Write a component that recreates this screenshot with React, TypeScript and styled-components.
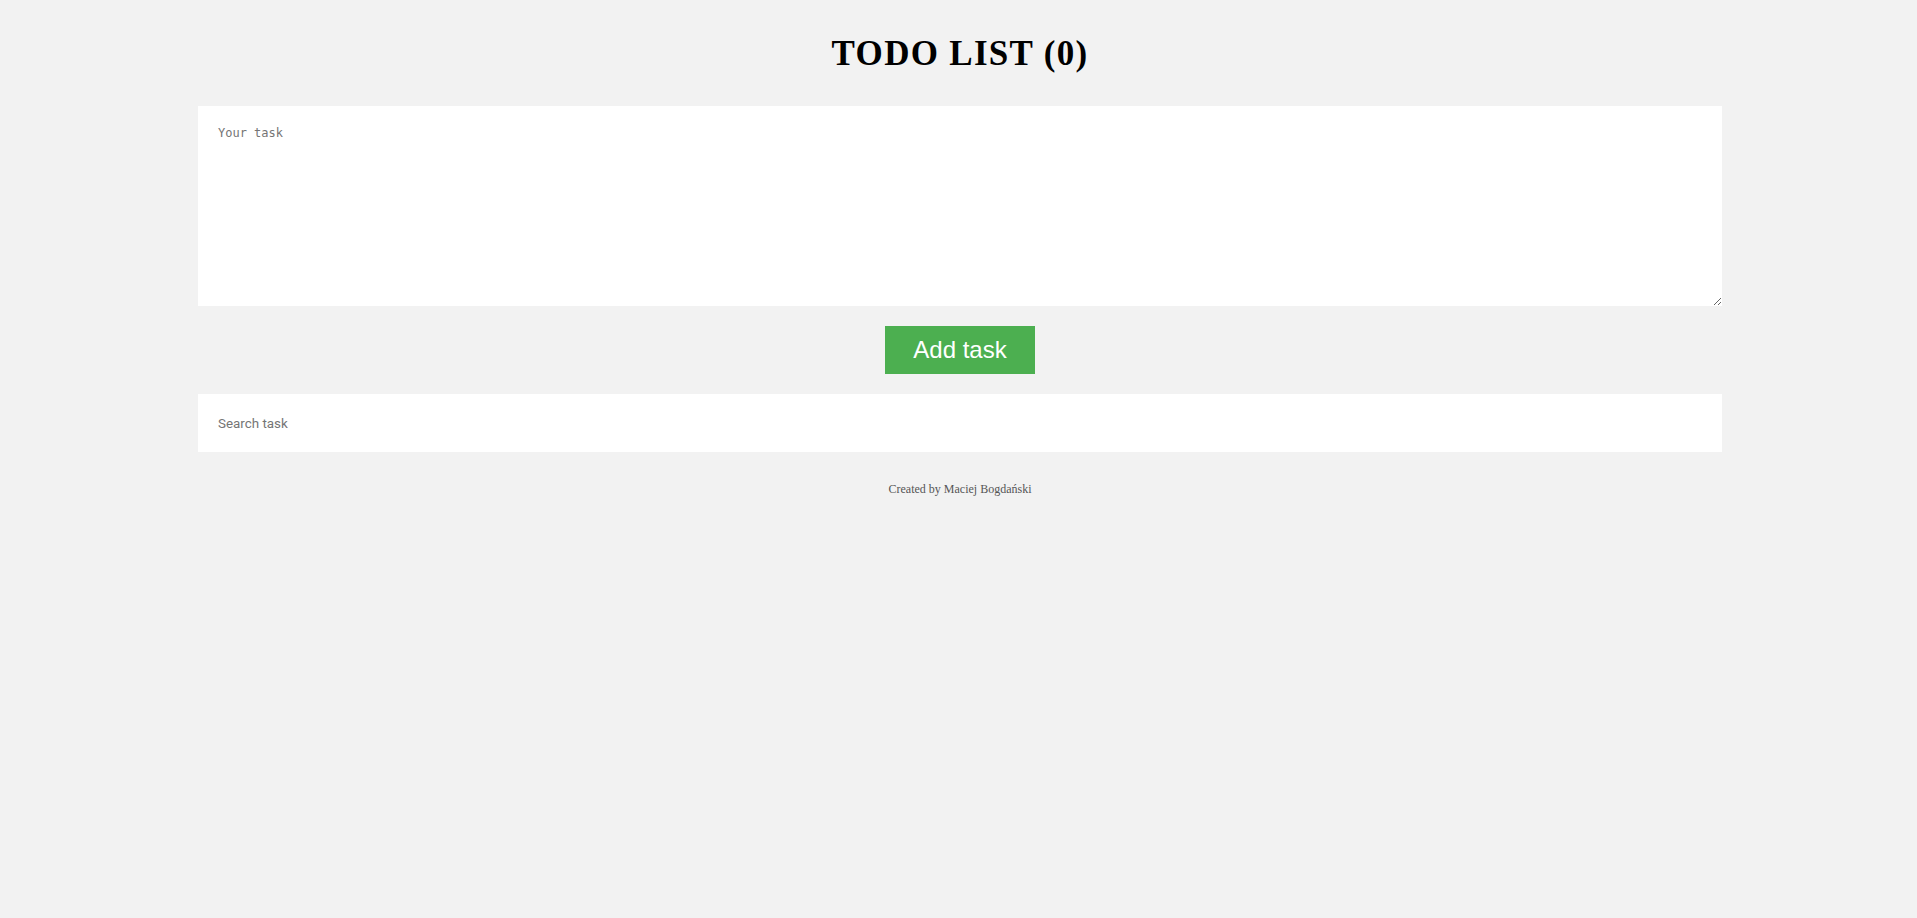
import React from "react";
import styled, { createGlobalStyle } from "styled-components";

const Global = createGlobalStyle`
  html, body { margin: 0; padding: 0; background: #f2f2f2; }
  body { font-family: "Liberation Serif", "Times New Roman", serif; }
  * { box-sizing: border-box; }
`;

const Page = styled.div`
  min-height: 918px;
  background: #f2f2f2;
  display: flex;
  flex-direction: column;
  align-items: center;
  padding: 0 195px 0 198px;
`;

const Title = styled.h1`
  margin: 30px 0 0;
  height: 48px;
  line-height: 48px;
  font-family: "Liberation Serif", "Times New Roman", serif;
  font-weight: bold;
  font-size: 35px;
  letter-spacing: 1.3px;
  color: #000;
  text-align: center;
`;

const Form = styled.div`
  width: 100%;
  display: flex;
  flex-direction: column;
  align-items: center;
  margin-top: 28px;
`;

const TaskArea = styled.textarea`
  display: block;
  width: 100%;
  height: 200px;
  border: none;
  outline: none;
  background: #fff;
  padding: 20px;
  font-family: "DejaVu Sans Mono", "Liberation Mono", monospace;
  font-size: 12px;
  color: #333;
  resize: vertical;
  &::placeholder { color: #757575; }
`;

const AddButton = styled.button`
  margin-top: 20px;
  width: 150px;
  height: 48px;
  border: none;
  background: #4caf50;
  color: #fff;
  font-family: "Liberation Sans", Arial, sans-serif;
  font-size: 24px;
  cursor: pointer;
`;

const SearchInput = styled.input`
  display: block;
  width: 100%;
  height: 58px;
  margin-top: 20px;
  border: none;
  outline: none;
  background: #fff;
  padding: 0 20px;
  font-family: Roboto, "Liberation Sans", sans-serif;
  font-size: 13.4px;
  color: #333;
  &::placeholder { color: #757575; }
`;

const Footer = styled.p`
  margin: 30px 0 0;
  font-family: "Liberation Serif", "Times New Roman", serif;
  font-size: 12px;
  color: #555;
  text-align: center;
`;

export default function App() {
  return (
    <>
      <Global />
      <Page>
        <Title>TODO LIST (0)</Title>
        <Form>
          <TaskArea placeholder="Your task" />
          <AddButton>Add task</AddButton>
          <SearchInput placeholder="Search task" />
        </Form>
        <Footer>Created by Maciej Bogdański</Footer>
      </Page>
    </>
  );
}
